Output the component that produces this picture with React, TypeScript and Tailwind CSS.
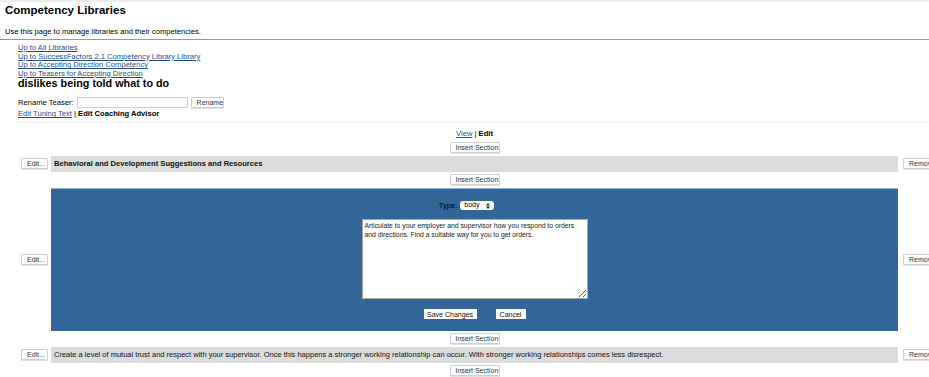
import React from "react";

function SmallButton({ label, className = "" }: { label: string; className?: string }) {
  return (
    <button
      className={
        "h-[11px] bg-white border border-[#cfcfcf] rounded-[1px] shadow-[0_1px_0_#e2e2e2] text-[7px] leading-none text-[#333] px-[5px] whitespace-nowrap " +
        className
      }
    >
      {label}
    </button>
  );
}

function InsertRow({ className = "" }: { className?: string }) {
  return (
    <div className={"flex " + className}>
      <div className="w-[51px] shrink-0" />
      <div className="w-[847px] shrink-0 flex justify-center items-center h-[16px]">
        <SmallButton label="Insert Section" className="w-[50px] px-0" />
      </div>
    </div>
  );
}

function SectionRow({ text, bold }: { text: string; bold?: boolean }) {
  return (
    <div className="flex items-center">
      <div className="w-[51px] shrink-0 flex justify-end pr-[3px]">
        <SmallButton label="Edit..." className="w-[27px] px-0" />
      </div>
      <div
        className={
          "w-[847px] shrink-0 h-[16px] bg-[#dcdcdc] flex items-center pl-[3px] text-[#111] " +
          (bold ? "font-bold text-[7.6px]" : "text-[7.5px]")
        }
      >
        {text}
      </div>
      <div className="pl-[5px] shrink-0 flex">
        <SmallButton label="Remove" className="w-[34px] px-[3px] text-left" />
      </div>
    </div>
  );
}

export default function App() {
  return (
    <div
      className="w-[929px] h-[377px] overflow-hidden bg-white text-black"
      style={{ fontFamily: '"Liberation Sans", Arial, sans-serif' }}
    >
      <div className="h-[2px] bg-[#ececec]" />
      <div className="px-[5px] pt-[1px]">
        <h1 className="text-[11.5px] font-bold leading-[14px]">Competency Libraries</h1>
        <p className="text-[7.6px] leading-[10px] mt-[10px]">
          Use this page to manage libraries and their competencies.
        </p>
      </div>
      <div className="h-px bg-[#9a9a9a] mt-[2px]" />

      <div className="pl-[18px] pt-[4px] flex flex-col text-[7.6px] leading-[8.6px]">
        <a className="text-[#1f4f8f] underline">Up to All Libraries</a>
        <a className="text-[#1f4f8f] underline">Up to SuccessFactors 2.1 Competency Library Library</a>
        <a className="text-[#1f4f8f] underline">Up to Accepting Direction Competency</a>
        <a className="text-[#1f4f8f] underline">Up to Teasers for Accepting Direction</a>
        <div className="text-[10.8px] font-bold leading-[13px] mt-[-1px]">dislikes being told what to do</div>
        <div className="flex items-center gap-[3px] mt-[7px]">
          <span>Rename Teaser:</span>
          <input className="w-[111px] h-[11px] border border-[#cfcfcf] bg-white" />
          <SmallButton label="Rename" className="w-[33px] px-0" />
        </div>
        <div className="mt-[2px]">
          <a className="text-[#1f4f8f] underline">Edit Tuning Text</a>
          <span> | </span>
          <b>Edit Coaching Advisor</b>
        </div>
      </div>
      <div className="ml-[18px] h-px bg-[#eeeeee] mt-[3px]" />

      <div className="flex mt-[6px]">
        <div className="w-[51px] shrink-0" />
        <div className="w-[847px] shrink-0 text-center text-[7.6px] leading-[10px]">
          <a className="text-[#1f4f8f] underline">View</a> | <b>Edit</b>
        </div>
      </div>
      <InsertRow className="mt-[1px]" />
      <SectionRow text="Behavioral and Development Suggestions and Resources" bold />
      <InsertRow />

      <div className="flex items-center">
        <div className="w-[51px] shrink-0 flex justify-end pr-[3px]">
          <SmallButton label="Edit..." className="w-[27px] px-0" />
        </div>
        <div className="w-[847px] shrink-0 h-[143px] bg-[#326598] border-t border-[#8fb0d0] flex flex-col items-center pt-[11px]">
          <div className="flex items-center gap-[3px] text-[7.6px] ml-[-16px]">
            <span>Type:</span>
            <div className="w-[34px] h-[9px] bg-white rounded-[3px] flex items-center justify-between px-[4px] text-[7px]">
              <span>body</span>
              <svg width="4" height="6" viewBox="0 0 4 6">
                <path d="M0 2.4 L2 0 L4 2.4 Z M0 3.6 L2 6 L4 3.6 Z" fill="#222" />
              </svg>
            </div>
          </div>
          <textarea
            className="mt-[8px] w-[226px] h-[80px] bg-white border border-[#a9a9a9] text-[6.8px] leading-[8.5px] p-[2px] text-[#222] resize"
            defaultValue="Articulate to your employer and supervisor how you respond to orders and directions. Find a suitable way for you to get orders."
          />
          <div className="flex gap-[19px] mt-[10px]">
            <button className="h-[10px] w-[53px] bg-white text-[7px] leading-none text-[#111]">Save Changes</button>
            <button className="h-[10px] w-[30px] bg-white text-[7px] leading-none text-[#111]">Cancel</button>
          </div>
        </div>
        <div className="pl-[5px] shrink-0 flex">
          <SmallButton label="Remove" className="w-[34px] px-[3px] text-left" />
        </div>
      </div>

      <InsertRow />
      <SectionRow text="Create a level of mutual trust and respect with your supervisor. Once this happens a stronger working relationship can occur. With stronger working relationships comes less disrespect." />
      <InsertRow />
    </div>
  );
}
